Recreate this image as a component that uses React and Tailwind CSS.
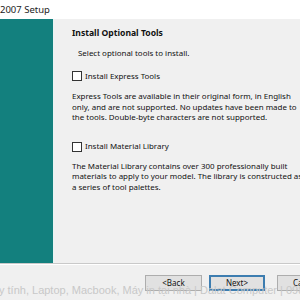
import React from "react";

export default function App() {
  return (
    <div
      className="relative w-[300px] h-[300px] overflow-hidden bg-[#f0f0f0] text-[#111]"
      style={{ fontFamily: '"Noto Sans", "Open Sans", sans-serif' }}
    >
      <div className="h-[19px] bg-white flex items-center text-[9.5px] leading-none text-[#222] whitespace-nowrap">
        2007 Setup
      </div>
      <div className="flex h-[244px]">
        <div className="w-[54px] shrink-0 bg-[#13807e] border-r border-[#e8f4f3]" />
        <div className="flex-1 overflow-hidden pl-[18px] text-[7.95px] leading-[10.5px] whitespace-nowrap">
          <div className="mt-[9px] font-bold text-[8.6px] leading-[11px]">Install Optional Tools</div>
          <div className="mt-[9px] ml-[6px]">Select optional tools to install.</div>
          <div className="mt-[12.5px] flex items-center h-[10px] gap-[3px]">
            <div className="w-[10px] h-[10px] bg-white border border-[#333]" />
            <span>Install Express Tools</span>
          </div>
          <div className="mt-[10px]">
            <div>Express Tools are available in their original form, in English</div>
            <div>only, and are not supported. No updates have been made to</div>
            <div>the tools. Double-byte characters are not supported.</div>
          </div>
          <div className="mt-[19px] flex items-center h-[10px] gap-[3px]">
            <div className="w-[10px] h-[10px] bg-white border border-[#333]" />
            <span>Install Material Library</span>
          </div>
          <div className="mt-[9px]">
            <div>The Material Library contains over 300 professionally built</div>
            <div>materials to apply to your model. The library is constructed as</div>
            <div>a series of tool palettes.</div>
          </div>
        </div>
      </div>
      <div className="h-px bg-[#c9c9c9]" />
      <div className="h-px bg-white" />
      <div className="flex pt-[10px] pl-[145px] gap-[7px] text-[8px] whitespace-nowrap">
        <div className="w-[57px] h-[16px] shrink-0 bg-[#e1e1e1] border border-[#adadad] flex items-center justify-center">
          &lt;Back
        </div>
        <div className="w-[56px] h-[16px] shrink-0 bg-[#e1e1e1] border-2 border-[#3d7db0] flex items-center justify-center">
          Next&gt;
        </div>
        <div className="ml-[5px] w-[57px] h-[16px] shrink-0 bg-[#e1e1e1] border border-[#adadad] flex items-center justify-center">
          Cancel
        </div>
      </div>
      <div
        className="absolute left-[-1px] top-[284px] text-[11px] leading-[12px] whitespace-nowrap text-[#c8c8c8]"
        style={{ fontFamily: '"Liberation Sans", sans-serif' }}
      >
        y tính, Laptop, Macbook, Máy in tại nhà | Dalat Computer | 0989
      </div>
    </div>
  );
}
